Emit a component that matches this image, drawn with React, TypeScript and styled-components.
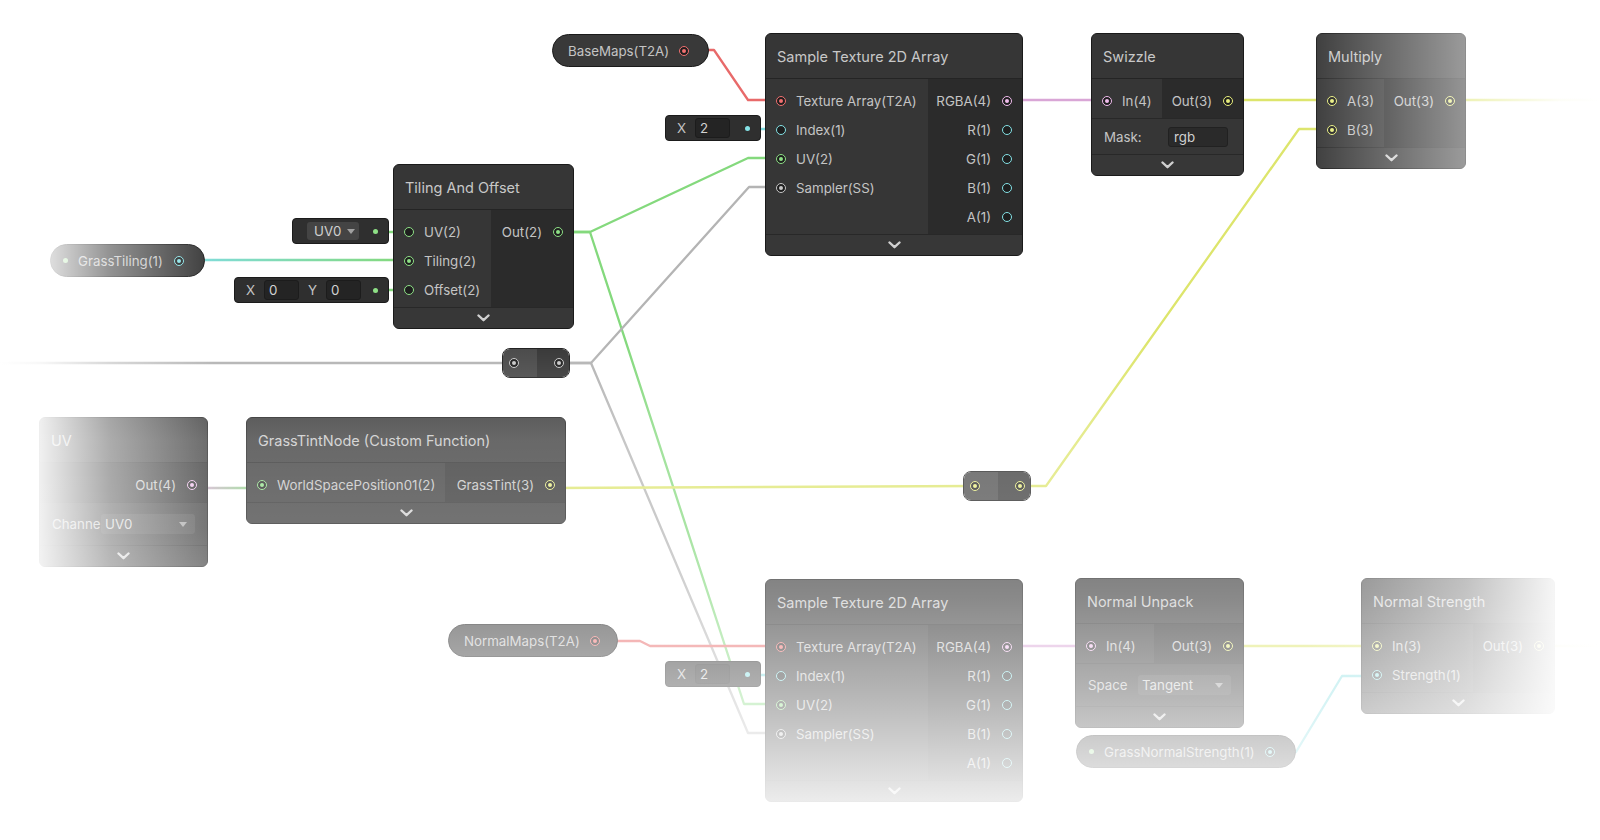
import React from 'react'
import styled, { createGlobalStyle } from 'styled-components'

type PortDef = { label: string; color: string; linked?: boolean }

type NodeProps = {
  x: number
  y: number
  w: number
  title: string
  inW?: number
  inputs?: PortDef[]
  outputs: PortDef[]
  controlH?: number
  children?: React.ReactNode
}

const GlobalStyle = createGlobalStyle`
  html, body {
    margin: 0;
    padding: 0;
    background: #ffffff;
  }
  body {
    font-family: Inter, "Noto Sans", "Liberation Sans", sans-serif;
  }
`

// port colours
const TEX = '#f07070'
const FLOAT = '#84e2e6'
const VEC2 = '#8ee086'
const VEC3 = '#e8ee7c'
const VEC4 = '#f0bcec'
const SAMPLER = '#c8c8c8'

// wire colours read a bit darker than the port rings
const W_TEX = '#e86a6a'
const W_FLOAT = '#7fdce0'
const W_VEC2 = '#84d97d'
const W_VEC3 = '#dde56c'
const W_VEC4 = '#d9a6d6'
const W_SAMPLER = '#b4b4b4'

const Canvas = styled.div`
  position: relative;
  width: 1600px;
  height: 840px;
  overflow: hidden;
  background: #ffffff;
`

const WireLayer = styled.svg`
  position: absolute;
  left: 0;
  top: 0;
`

const NodeBox = styled.div<{ $x: number; $y: number; $w: number }>`
  position: absolute;
  left: ${(p) => p.$x}px;
  top: ${(p) => p.$y}px;
  width: ${(p) => p.$w}px;
  box-sizing: border-box;
  background: #363636;
  border: 1px solid #1a1a1a;
  border-radius: 6px;
  overflow: hidden;
  color: #c4c4c4;
`

const Title = styled.div`
  height: 44px;
  padding: 0 11px;
  display: flex;
  align-items: center;
  font-size: 14.5px;
  color: #c8c8c8;
  white-space: nowrap;
  border-bottom: 1px solid #242424;
`

const PortArea = styled.div`
  display: flex;
`

const Inputs = styled.div<{ $w: number }>`
  width: ${(p) => p.$w}px;
  flex: none;
  padding: 7px 0 3px;
  background: #363636;
`

const Outputs = styled.div`
  flex: 1;
  padding: 7px 0 3px;
  background: #2b2b2b;
`

const Row = styled.div`
  height: 29px;
  display: flex;
  align-items: center;
  font-size: 13.3px;
  white-space: nowrap;
`

const InRow = styled(Row)`
  padding-left: 10px;
  gap: 10px;
`

const OutRow = styled(Row)`
  justify-content: flex-end;
  padding-right: 10px;
  gap: 11px;
`

const Port = styled.span<{ $c: string; $linked?: boolean }>`
  width: 10px;
  height: 10px;
  box-sizing: border-box;
  border-radius: 50%;
  border: 1.6px solid ${(p) => p.$c};
  background: #1e1e1e;
  flex: none;
  display: flex;
  align-items: center;
  justify-content: center;
  &::after {
    content: '';
    width: 4px;
    height: 4px;
    border-radius: 50%;
    background: ${(p) => (p.$linked ? p.$c : 'transparent')};
  }
`

const Controls = styled.div<{ $h: number }>`
  height: ${(p) => p.$h}px;
  display: flex;
  align-items: center;
  padding: 0 12px;
  font-size: 13.3px;
  border-top: 1px solid #282828;
`

const ControlLabel = styled.span<{ $w: number }>`
  width: ${(p) => p.$w}px;
  flex: none;
  white-space: nowrap;
`

const TextField = styled.div<{ $w: number }>`
  width: ${(p) => p.$w}px;
  height: 20px;
  box-sizing: border-box;
  background: #2a2a2a;
  border: 1px solid #212121;
  border-radius: 3px;
  padding: 0 5px;
  display: flex;
  align-items: center;
  color: #d0d0d0;
`

const Dropdown = styled.div<{ $w: number }>`
  width: ${(p) => p.$w}px;
  height: 20px;
  box-sizing: border-box;
  background: #454545;
  border-radius: 3px;
  padding: 0 8px 0 4px;
  display: flex;
  align-items: center;
  gap: 6px;
  color: #d0d0d0;
`

const Arrow = styled.span`
  margin-left: auto;
  width: 0;
  height: 0;
  border-left: 4px solid transparent;
  border-right: 4px solid transparent;
  border-top: 5px solid #a0a0a0;
`

const Collapse = styled.div`
  height: 20px;
  display: flex;
  align-items: center;
  justify-content: center;
  border-top: 1px solid #282828;
  background: #373737;
`

const Pill = styled.div<{ $x: number; $y: number; $w: number }>`
  position: absolute;
  left: ${(p) => p.$x}px;
  top: ${(p) => p.$y}px;
  width: ${(p) => p.$w}px;
  height: 33px;
  box-sizing: border-box;
  border: 1px solid #1a1a1a;
  border-radius: 17px;
  background: #393939;
  display: flex;
  align-items: center;
  padding: 0 20px 0 12px;
  gap: 10px;
  font-size: 13.3px;
  color: #c4c4c4;
  white-space: nowrap;
  & > ${Port} {
    margin-left: auto;
  }
`

const PillText = styled.span<{ $indent?: boolean }>`
  margin-left: ${(p) => (p.$indent ? 3 : 0)}px;
`

const ExposedDot = styled.span`
  width: 5px;
  height: 5px;
  border-radius: 50%;
  background: #a6e49c;
  flex: none;
`

const InlineBox = styled.div<{ $x: number; $y: number; $w: number }>`
  position: absolute;
  left: ${(p) => p.$x}px;
  top: ${(p) => p.$y}px;
  width: ${(p) => p.$w}px;
  height: 26px;
  box-sizing: border-box;
  background: #2f2f2f;
  border: 1px solid #1b1b1b;
  border-radius: 4px;
  display: flex;
  align-items: center;
  padding: 0 10px 0 11px;
  gap: 9px;
  font-size: 13.3px;
  color: #c4c4c4;
`

const NumField = styled.div`
  width: 35px;
  height: 20px;
  box-sizing: border-box;
  background: #242424;
  border: 1px solid #1c1c1c;
  border-radius: 3px;
  padding-left: 4px;
  display: flex;
  align-items: center;
  color: #d2d2d2;
`

const InlineDropdown = styled.div`
  width: 52px;
  height: 18px;
  margin-left: 3px;
  box-sizing: border-box;
  background: #444444;
  border-radius: 3px;
  padding: 0 6px 0 7px;
  display: flex;
  align-items: center;
  gap: 6px;
  color: #d0d0d0;
`

const ValueDot = styled.span<{ $c: string }>`
  margin-left: auto;
  width: 5px;
  height: 5px;
  border-radius: 50%;
  background: ${(p) => p.$c};
  flex: none;
`

const Redirect = styled.div<{ $x: number; $y: number }>`
  position: absolute;
  left: ${(p) => p.$x}px;
  top: ${(p) => p.$y}px;
  width: 68px;
  height: 30px;
  box-sizing: border-box;
  border: 1px solid #1e1e1e;
  border-radius: 8px;
  overflow: hidden;
  display: flex;
`

const RedirectHalf = styled.div<{ $right?: boolean }>`
  flex: 1;
  display: flex;
  align-items: center;
  justify-content: ${(p) => (p.$right ? 'flex-end' : 'flex-start')};
  padding: ${(p) => (p.$right ? '0 5px 0 0' : '0 0 0 6px')};
  background: ${(p) => (p.$right ? '#363636' : '#484848')};
`

const Fade = styled.div`
  position: absolute;
  left: 0;
  top: 0;
  width: 100%;
  height: 100%;
  pointer-events: none;
  background:
    linear-gradient(to right, #ffffff 0px, rgba(255, 255, 255, 0.9) 40px, rgba(255, 255, 255, 0.45) 110px, rgba(255, 255, 255, 0) 215px),
    linear-gradient(to left, #ffffff 0px, rgba(255, 255, 255, 0.95) 40px, rgba(255, 255, 255, 0.5) 134px, rgba(255, 255, 255, 0) 300px),
    linear-gradient(
      to bottom,
      rgba(255, 255, 255, 0) 0px,
      rgba(255, 255, 255, 0) 340px,
      rgba(255, 255, 255, 0.25) 440px,
      rgba(255, 255, 255, 0.3) 530px,
      rgba(255, 255, 255, 0.42) 600px,
      rgba(255, 255, 255, 0.65) 700px,
      rgba(255, 255, 255, 0.88) 790px,
      #ffffff 840px
    );
`

const Chevron = () => (
  <svg width="13" height="8" viewBox="0 0 13 8">
    <polyline points="1.5,1.5 6.5,6.2 11.5,1.5" fill="none" stroke="#d0d0d0" strokeWidth="2.4" strokeLinecap="round" strokeLinejoin="round" />
  </svg>
)

const GraphNode = ({ x, y, w, title, inW = 0, inputs = [], outputs, controlH = 35, children }: NodeProps) => (
  <NodeBox $x={x} $y={y} $w={w}>
    <Title>{title}</Title>
    <PortArea>
      {inputs.length > 0 && (
        <Inputs $w={inW}>
          {inputs.map((p) => (
            <InRow key={p.label}>
              <Port $c={p.color} $linked={p.linked} />
              {p.label}
            </InRow>
          ))}
        </Inputs>
      )}
      <Outputs>
        {outputs.map((p) => (
          <OutRow key={p.label}>
            {p.label}
            <Port $c={p.color} $linked={p.linked} />
          </OutRow>
        ))}
      </Outputs>
    </PortArea>
    {children && <Controls $h={controlH}>{children}</Controls>}
    <Collapse>
      <Chevron />
    </Collapse>
  </NodeBox>
)

const wires: { pts: string; stroke: string }[] = [
  { pts: '683,50 714,50 748,100 781,100', stroke: W_TEX },
  { pts: '748,129 781,129', stroke: W_FLOAT },
  { pts: '558,232 590,232 748,158 781,158', stroke: W_VEC2 },
  { pts: '558,232 590,232 744,704 781,704', stroke: W_VEC2 },
  { pts: '0,363 514,363', stroke: W_SAMPLER },
  { pts: '559,363 591,363 749,187 781,187', stroke: W_SAMPLER },
  { pts: '559,363 591,363 748,733 781,733', stroke: W_SAMPLER },
  { pts: '180,260 408,260', stroke: 'url(#tilingWire)' },
  { pts: '376,232 408,232', stroke: W_VEC2 },
  { pts: '376,290 408,290', stroke: W_VEC2 },
  { pts: '1008,100 1107,100', stroke: W_VEC4 },
  { pts: '1228,100 1332,100', stroke: W_VEC3 },
  { pts: '1021,486 1046,486 1299,129 1332,129', stroke: W_VEC3 },
  { pts: '1451,100 1600,100', stroke: W_VEC3 },
  { pts: '192,488 261,488', stroke: 'url(#uvWire)' },
  { pts: '551,488 976,486', stroke: W_VEC3 },
  { pts: '593,641 640,641 650,646 781,646', stroke: W_TEX },
  { pts: '748,675 781,675', stroke: W_FLOAT },
  { pts: '1008,646 1091,646', stroke: W_VEC4 },
  { pts: '1227,646 1376,646', stroke: W_VEC3 },
  { pts: '1270,752 1296,752 1342,676 1376,676', stroke: W_FLOAT },
  { pts: '1540,646 1600,646', stroke: W_VEC3 },
]

const Wires = () => (
  <WireLayer width="1600" height="840" viewBox="0 0 1600 840">
    <defs>
      <linearGradient id="tilingWire" gradientUnits="userSpaceOnUse" x1="185" y1="0" x2="400" y2="0">
        <stop offset="0" stopColor={W_FLOAT} />
        <stop offset="1" stopColor={W_VEC2} />
      </linearGradient>
      <linearGradient id="uvWire" gradientUnits="userSpaceOnUse" x1="195" y1="0" x2="258" y2="0">
        <stop offset="0" stopColor={W_VEC4} />
        <stop offset="1" stopColor={W_VEC2} />
      </linearGradient>
    </defs>
    {wires.map((w, i) => (
      <polyline key={i} points={w.pts} fill="none" stroke={w.stroke} strokeWidth="2.3" strokeLinejoin="round" strokeLinecap="round" />
    ))}
  </WireLayer>
)

const sampleInputs = (): PortDef[] => [
  { label: 'Texture Array(T2A)', color: TEX, linked: true },
  { label: 'Index(1)', color: FLOAT },
  { label: 'UV(2)', color: VEC2, linked: true },
  { label: 'Sampler(SS)', color: SAMPLER, linked: true },
]

const sampleOutputs = (): PortDef[] => [
  { label: 'RGBA(4)', color: VEC4, linked: true },
  { label: 'R(1)', color: FLOAT },
  { label: 'G(1)', color: FLOAT },
  { label: 'B(1)', color: FLOAT },
  { label: 'A(1)', color: FLOAT },
]

export default function App() {
  return (
    <>
      <GlobalStyle />
      <Canvas>
        <Wires />

        <Pill $x={552} $y={34} $w={157}>
          <PillText $indent>BaseMaps(T2A)</PillText>
          <Port $c={TEX} $linked />
        </Pill>

        <InlineBox $x={665} $y={115} $w={96}>
          X<NumField>2</NumField>
          <ValueDot $c={FLOAT} />
        </InlineBox>

        <GraphNode x={765} y={33} w={258} inW={162} title="Sample Texture 2D Array" inputs={sampleInputs()} outputs={sampleOutputs()} />

        <GraphNode
          x={1091}
          y={33}
          w={153}
          inW={70}
          title="Swizzle"
          inputs={[{ label: 'In(4)', color: VEC4, linked: true }]}
          outputs={[{ label: 'Out(3)', color: VEC3, linked: true }]}
          controlH={35}
        >
          <ControlLabel $w={64}>Mask:</ControlLabel>
          <TextField $w={60}>rgb</TextField>
        </GraphNode>

        <GraphNode
          x={1316}
          y={33}
          w={150}
          inW={67}
          title="Multiply"
          inputs={[
            { label: 'A(3)', color: VEC3, linked: true },
            { label: 'B(3)', color: VEC3, linked: true },
          ]}
          outputs={[{ label: 'Out(3)', color: VEC3, linked: true }]}
        />

        <InlineBox $x={292} $y={218} $w={97}>
          <InlineDropdown>
            UV0
            <Arrow />
          </InlineDropdown>
          <ValueDot $c={VEC2} />
        </InlineBox>

        <Pill $x={50} $y={244} $w={155}>
          <ExposedDot />
          <PillText>GrassTiling(1)</PillText>
          <Port $c={FLOAT} $linked />
        </Pill>

        <InlineBox $x={234} $y={277} $w={155}>
          X<NumField>0</NumField>
          Y<NumField>0</NumField>
          <ValueDot $c={VEC2} />
        </InlineBox>

        <GraphNode
          x={393}
          y={164}
          w={181}
          inW={97}
          title="Tiling And Offset"
          inputs={[
            { label: 'UV(2)', color: VEC2 },
            { label: 'Tiling(2)', color: VEC2, linked: true },
            { label: 'Offset(2)', color: VEC2 },
          ]}
          outputs={[{ label: 'Out(2)', color: VEC2, linked: true }]}
        />

        <Redirect $x={502} $y={348}>
          <RedirectHalf>
            <Port $c={SAMPLER} $linked />
          </RedirectHalf>
          <RedirectHalf $right>
            <Port $c={SAMPLER} $linked />
          </RedirectHalf>
        </Redirect>

        <GraphNode x={39} y={417} w={169} title="UV" outputs={[{ label: 'Out(4)', color: VEC4, linked: true }]} controlH={42}>
          <ControlLabel $w={49}>Channe</ControlLabel>
          <Dropdown $w={95}>
            UV0
            <Arrow />
          </Dropdown>
        </GraphNode>

        <GraphNode
          x={246}
          y={417}
          w={320}
          inW={198}
          title="GrassTintNode (Custom Function)"
          inputs={[{ label: 'WorldSpacePosition01(2)', color: VEC2, linked: true }]}
          outputs={[{ label: 'GrassTint(3)', color: VEC3, linked: true }]}
        />

        <Redirect $x={963} $y={471}>
          <RedirectHalf>
            <Port $c={VEC3} $linked />
          </RedirectHalf>
          <RedirectHalf $right>
            <Port $c={VEC3} $linked />
          </RedirectHalf>
        </Redirect>

        <Pill $x={448} $y={624} $w={170}>
          <PillText $indent>NormalMaps(T2A)</PillText>
          <Port $c={TEX} $linked />
        </Pill>

        <InlineBox $x={665} $y={661} $w={96}>
          X<NumField>2</NumField>
          <ValueDot $c={FLOAT} />
        </InlineBox>

        <GraphNode x={765} y={579} w={258} inW={162} title="Sample Texture 2D Array" inputs={sampleInputs()} outputs={sampleOutputs()} />

        <GraphNode
          x={1075}
          y={578}
          w={169}
          inW={78}
          title="Normal Unpack"
          inputs={[{ label: 'In(4)', color: VEC4, linked: true }]}
          outputs={[{ label: 'Out(3)', color: VEC3, linked: true }]}
          controlH={42}
        >
          <ControlLabel $w={50}>Space</ControlLabel>
          <Dropdown $w={95}>
            Tangent
            <Arrow />
          </Dropdown>
        </GraphNode>

        <Pill $x={1076} $y={735} $w={220}>
          <ExposedDot />
          <PillText>GrassNormalStrength(1)</PillText>
          <Port $c={FLOAT} $linked />
        </Pill>

        <GraphNode
          x={1361}
          y={578}
          w={194}
          inW={111}
          title="Normal Strength"
          inputs={[
            { label: 'In(3)', color: VEC3, linked: true },
            { label: 'Strength(1)', color: FLOAT, linked: true },
          ]}
          outputs={[{ label: 'Out(3)', color: VEC3, linked: true }]}
        />

        <Fade />
      </Canvas>
    </>
  )
}
